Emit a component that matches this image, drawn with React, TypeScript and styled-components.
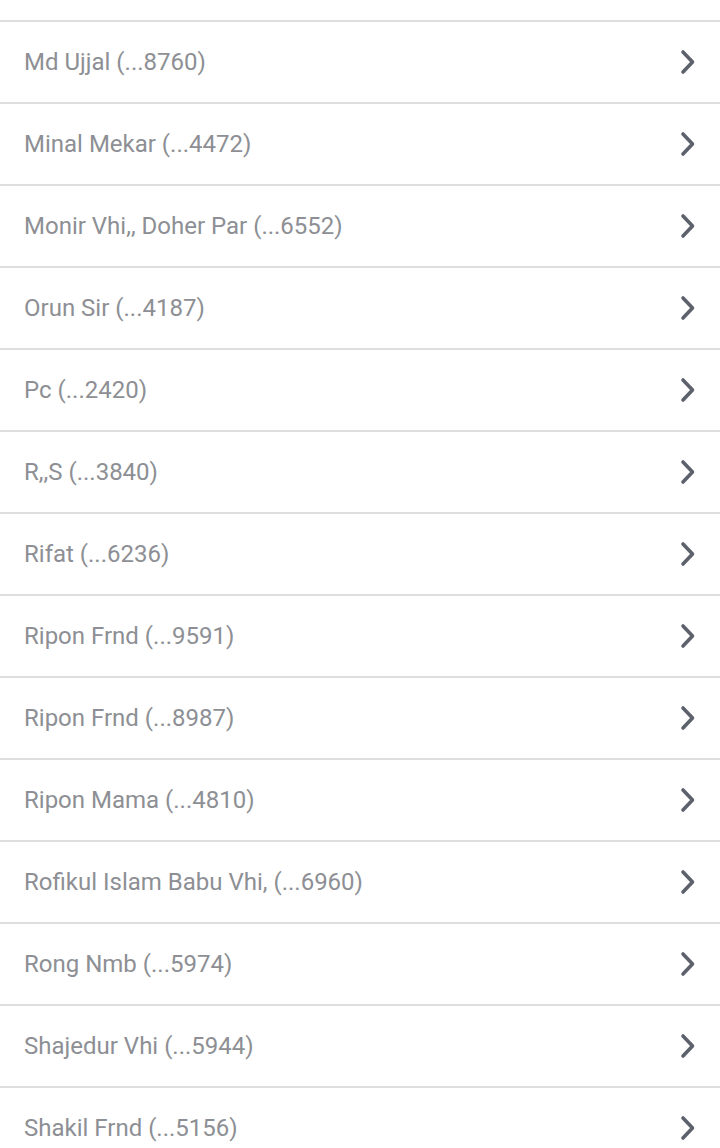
import React from "react";
import styled, { createGlobalStyle } from "styled-components";

const Global = createGlobalStyle`
  html, body { margin: 0; padding: 0; background: #ffffff; }
  body { font-family: Roboto, "Noto Sans", sans-serif; overflow: hidden; }
`;

const List = styled.div`
  display: flex;
  flex-direction: column;
  width: 720px;
  height: 1148px;
  overflow: hidden;
  background: #ffffff;
`;

const TopCut = styled.div`
  height: 20px;
  flex-shrink: 0;
  border-bottom: 2px solid #dedede;
`;

const Row = styled.div`
  display: flex;
  align-items: center;
  justify-content: space-between;
  flex-shrink: 0;
  height: 80px;
  padding: 0 24px;
  border-bottom: 2px solid #dedede;
`;

const Name = styled.span`
  font-family: Roboto, sans-serif;
  font-size: 24px;
  color: #8d8f94;
`;

const Chevron = styled.svg`
  width: 16px;
  height: 26px;
  flex-shrink: 0;
`;

const contacts = [
  "Md Ujjal (...8760)",
  "Minal Mekar (...4472)",
  "Monir Vhi,, Doher Par (...6552)",
  "Orun Sir (...4187)",
  "Pc (...2420)",
  "R,,S (...3840)",
  "Rifat (...6236)",
  "Ripon Frnd (...9591)",
  "Ripon Frnd (...8987)",
  "Ripon Mama (...4810)",
  "Rofikul Islam Babu Vhi, (...6960)",
  "Rong Nmb (...5974)",
  "Shajedur Vhi (...5944)",
  "Shakil Frnd (...5156)",
];

export default function App() {
  return (
    <>
      <Global />
      <List>
        <TopCut />
        {contacts.map((c, i) => (
          <Row key={i}>
            <Name>{c}</Name>
            <Chevron viewBox="0 0 16 26">
              <path
                d="M3 3 L12.5 13 L3 23"
                fill="none"
                stroke="#5c616b"
                strokeWidth="3.6"
                strokeLinecap="round"
                strokeLinejoin="round"
              />
            </Chevron>
          </Row>
        ))}
      </List>
    </>
  );
}
